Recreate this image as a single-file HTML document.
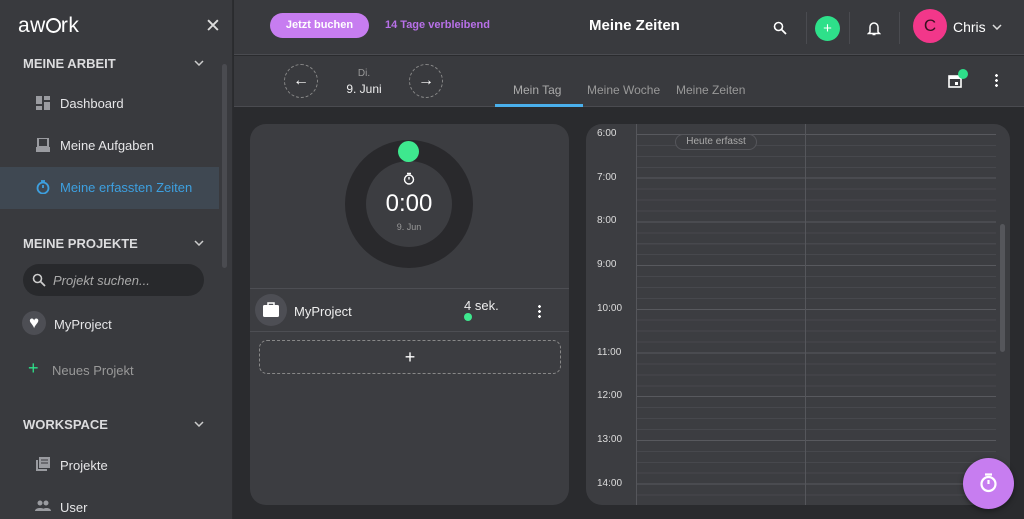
<!DOCTYPE html><html><head><meta charset="utf-8"><style>
*{box-sizing:border-box;margin:0;padding:0}
body{width:1024px;height:519px;overflow:hidden;background:#2a2b2e;font-family:"Liberation Sans",sans-serif;color:#e8e8ea;position:relative}
.a{position:absolute}
.sb{left:0;top:0;width:233px;height:519px;background:#393a3e;border-right:1px solid #2c2d30}
.sec{font-weight:bold;font-size:13px;color:#dcdcde;left:23px}
.chev{left:194px;width:10px;height:6px}
.item{font-size:13px;color:#e6e6e8;left:60px}
.ic{left:36px;width:14px;height:14px}
</style></head><body>
<div class="a sb">
 <div class="a" style="left:18px;top:14px;font-size:21px;color:#fff;letter-spacing:0.5px">aw<span style="display:inline-block;width:15px;height:15px;border:2.5px solid #fff;border-radius:50%;vertical-align:-1px"></span>rk</div>
 <div class="a" style="left:205px;top:15px;font-size:19px;color:#ddd">✕</div>
 <div class="a sec" style="top:56px">MEINE ARBEIT</div><svg class="a chev" style="top:60px" viewBox="0 0 10 6"><path d="M1 1l4 4 4-4" fill="none" stroke="#ccc" stroke-width="1.5"/></svg>
 <div class="a" style="left:222px;top:64px;width:5px;height:204px;background:#4a4b50;border-radius:3px"></div>
 <svg class="a ic" style="top:96px" viewBox="0 0 14 14"><rect x="0" y="0" width="6" height="8" fill="#9a9ba0"/><rect x="8" y="0" width="6" height="4" fill="#9a9ba0"/><rect x="0" y="10" width="6" height="4" fill="#9a9ba0"/><rect x="8" y="6" width="6" height="8" fill="#9a9ba0"/></svg>
 <div class="a item" style="top:96px">Dashboard</div>
 <svg class="a ic" style="top:138px" viewBox="0 0 14 14"><rect x="2" y="0" width="10" height="9" fill="none" stroke="#9a9ba0" stroke-width="2"/><rect x="0" y="9" width="14" height="5" fill="#9a9ba0"/></svg>
 <div class="a item" style="top:138px">Meine Aufgaben</div>
 <div class="a" style="left:0;top:167px;width:219px;height:42px;background:#3f4852"></div>
 <svg class="a ic" style="top:180px" viewBox="0 0 14 14"><circle cx="7" cy="8" r="5.5" fill="none" stroke="#3da0e0" stroke-width="1.8"/><path d="M5 1h4M7 8V5" stroke="#3da0e0" stroke-width="1.8"/></svg>
 <div class="a item" style="top:180px;color:#3da0e0">Meine erfassten Zeiten</div>
 <div class="a sec" style="top:236px">MEINE PROJEKTE</div><svg class="a chev" style="top:240px" viewBox="0 0 10 6"><path d="M1 1l4 4 4-4" fill="none" stroke="#ccc" stroke-width="1.5"/></svg>
 <div class="a" style="left:23px;top:264px;width:181px;height:32px;border-radius:16px;background:#28292c"></div>
 <svg class="a" style="left:32px;top:273px" width="14" height="14" viewBox="0 0 14 14"><circle cx="5.5" cy="5.5" r="4" fill="none" stroke="#ccc" stroke-width="1.6"/><path d="M8.5 8.5L13 13" stroke="#ccc" stroke-width="1.8"/></svg>
 <div class="a" style="left:53px;top:273px;font-size:13px;font-style:italic;color:#aaa">Projekt suchen...</div>
 <div class="a" style="left:22px;top:311px;width:24px;height:24px;border-radius:50%;background:#4d4e54;color:#fff;font-size:17px;text-align:center;line-height:24px">♥</div>
 <div class="a item" style="left:54px;top:317px">MyProject</div>
 <div class="a" style="left:28px;top:358px;color:#2ee08a;font-size:18px">+</div>
 <div class="a item" style="left:52px;top:363px;color:#999">Neues Projekt</div>
 <div class="a sec" style="top:417px">WORKSPACE</div><svg class="a chev" style="top:421px" viewBox="0 0 10 6"><path d="M1 1l4 4 4-4" fill="none" stroke="#ccc" stroke-width="1.5"/></svg>
 <svg class="a ic" style="top:457px" viewBox="0 0 14 14"><rect x="3" y="0" width="11" height="11" fill="#9a9ba0"/><rect x="0" y="3" width="2" height="11" fill="#9a9ba0"/><rect x="0" y="12" width="11" height="2" fill="#9a9ba0"/><path d="M5 3h7M5 6h7" stroke="#393a3e" stroke-width="1"/></svg>
 <div class="a item" style="top:458px">Projekte</div>
 <svg class="a" style="left:35px;top:500px" width="16" height="12" viewBox="0 0 16 12"><circle cx="5" cy="3" r="2.5" fill="#9a9ba0"/><circle cx="11" cy="3" r="2.5" fill="#9a9ba0"/><path d="M0 11c0-4 10-4 10 0zM7 11c0-4 9-4 9 0z" fill="#9a9ba0"/></svg>
 <div class="a item" style="top:500px">User</div>
</div>
<!-- header -->
<div class="a" style="left:234px;top:0;width:790px;height:55px;background:#393a3e;border-bottom:1px solid #4a4b50"></div>
<div class="a" style="left:270px;top:13px;width:99px;height:25px;border-radius:13px;background:#c77df0;color:#fff;font-size:11px;font-weight:bold;text-align:center;line-height:25px">Jetzt buchen</div>
<div class="a" style="left:385px;top:19px;font-size:11px;font-weight:bold;color:#b870e8">14 Tage verbleibend</div>
<div class="a" style="left:589px;top:17px;font-size:15px;font-weight:bold;color:#fff">Meine Zeiten</div>
<svg class="a" style="left:773px;top:21px" width="14" height="14" viewBox="0 0 14 14"><circle cx="5.5" cy="5.5" r="4" fill="none" stroke="#fff" stroke-width="1.6"/><path d="M8.5 8.5L13 13" stroke="#fff" stroke-width="1.8"/></svg>
<div class="a" style="left:806px;top:12px;width:1px;height:32px;background:#4a4b50"></div>
<div class="a" style="left:815px;top:16px;width:25px;height:25px;border-radius:50%;background:#2ee08a;color:#fff;text-align:center;line-height:25px;font-size:15px">+</div>
<div class="a" style="left:849px;top:12px;width:1px;height:32px;background:#4a4b50"></div>
<svg class="a" style="left:867px;top:20px" width="14" height="16" viewBox="0 0 14 16"><path d="M3 12V7a4 4 0 018 0v5l1.5 1.5h-11z" fill="none" stroke="#fff" stroke-width="1.5"/><path d="M5.5 14.5h3" stroke="#fff" stroke-width="1.5"/></svg>
<div class="a" style="left:899px;top:12px;width:1px;height:32px;background:#4a4b50"></div>
<div class="a" style="left:913px;top:9px;width:34px;height:34px;border-radius:50%;background:#f2378a;color:#3a1020;text-align:center;line-height:34px;font-size:17px">C</div>
<div class="a" style="left:953px;top:19px;font-size:14px;color:#fff">Chris</div>
<svg class="a" style="left:992px;top:24px" width="10" height="6" viewBox="0 0 10 6"><path d="M1 1l4 4 4-4" fill="none" stroke="#ddd" stroke-width="1.5"/></svg>
<!-- subheader -->
<div class="a" style="left:234px;top:56px;width:790px;height:51px;background:#393a3e;border-bottom:1px solid #4a4b50"></div>
<div class="a" style="left:284px;top:64px;width:34px;height:34px;border-radius:50%;border:1px dashed #888;text-align:center;line-height:31px;font-size:16px;color:#fff">←</div>
<div class="a" style="left:409px;top:64px;width:34px;height:34px;border-radius:50%;border:1px dashed #888;text-align:center;line-height:31px;font-size:16px;color:#fff">→</div>
<div class="a" style="left:340px;top:68px;width:48px;text-align:center;font-size:10px;color:#999">Di.</div>
<div class="a" style="left:335px;top:82px;width:58px;text-align:center;font-size:12px;color:#eee">9. Juni</div>
<div class="a" style="left:513px;top:83px;font-size:12px;color:#aaa">Mein Tag</div>
<div class="a" style="left:495px;top:104px;width:88px;height:3px;background:#4ab0ec"></div>
<div class="a" style="left:587px;top:83px;font-size:12px;color:#999">Meine Woche</div>
<div class="a" style="left:676px;top:83px;font-size:12px;color:#999">Meine Zeiten</div>
<svg class="a" style="left:948px;top:73px" width="14" height="15" viewBox="0 0 14 15"><rect x="1" y="3" width="12" height="11" fill="none" stroke="#fff" stroke-width="1.6"/><rect x="1" y="3" width="12" height="3" fill="#fff"/><rect x="7" y="9" width="3" height="3" fill="#fff"/></svg>
<div class="a" style="left:958px;top:69px;width:10px;height:10px;border-radius:50%;background:#2ee08a"></div>
<div class="a" style="left:995px;top:73px;width:3px;height:14px;background:radial-gradient(circle,#fff 1.3px,transparent 1.5px) 0 0/3px 5px"></div>
<!-- left card -->
<div class="a" style="left:250px;top:124px;width:319px;height:381px;border-radius:16px;background:#3c3d41"></div>
<div class="a" style="left:345px;top:140px;width:128px;height:128px;border-radius:50%;background:#29292c"></div>
<div class="a" style="left:366px;top:161px;width:86px;height:86px;border-radius:50%;background:#3c3d41"></div>
<div class="a" style="left:398px;top:141px;width:21px;height:21px;border-radius:50%;background:#3ee88e"></div>
<svg class="a" style="left:403px;top:172px" width="12" height="13" viewBox="0 0 12 13"><circle cx="6" cy="7.5" r="4.5" fill="none" stroke="#fff" stroke-width="1.4"/><path d="M4 1.5h4M6 7.5V5" stroke="#fff" stroke-width="1.4"/></svg>
<div class="a" style="left:359px;top:190px;width:100px;text-align:center;font-size:24px;color:#fff">0:00</div>
<div class="a" style="left:359px;top:222px;width:100px;text-align:center;font-size:9px;color:#999">9. Jun</div>
<div class="a" style="left:250px;top:288px;width:319px;height:1px;background:#4d4e53"></div>
<div class="a" style="left:250px;top:331px;width:319px;height:1px;background:#4d4e53"></div>
<div class="a" style="left:255px;top:294px;width:32px;height:32px;border-radius:50%;background:#4d4e54"></div>
<svg class="a" style="left:262px;top:301px" width="18" height="17" viewBox="0 0 18 17"><rect x="1" y="4" width="16" height="12" rx="1.5" fill="#fff"/><path d="M6 4V2h6v2" fill="none" stroke="#fff" stroke-width="1.5"/></svg>
<div class="a" style="left:294px;top:304px;font-size:13px;color:#eee">MyProject</div>
<div class="a" style="left:464px;top:298px;font-size:13px;color:#eee">4 sek.</div>
<div class="a" style="left:464px;top:313px;width:8px;height:8px;border-radius:50%;background:#3ee88e"></div>
<div class="a" style="left:538px;top:304px;width:3px;height:14px;background:radial-gradient(circle,#fff 1.3px,transparent 1.5px) 0 0/3px 5px"></div>
<div class="a" style="left:259px;top:340px;width:302px;height:34px;border:1px dashed #888;border-radius:8px;text-align:center;line-height:32px;font-size:18px;color:#fff">+</div>
<!-- right card -->
<div class="a" style="left:586px;top:124px;width:424px;height:381px;border-radius:16px;background:#3c3d41;overflow:hidden">
 <div class="a" style="left:50px;top:10px;width:360px;height:380px;background:repeating-linear-gradient(to bottom,#47484d 0,#47484d 1px,transparent 1px,transparent 10.925px)"></div>
 <div class="a" style="left:50px;top:10px;width:360px;height:380px;background:repeating-linear-gradient(to bottom,#58595e 0,#58595e 1px,transparent 1px,transparent 43.7px)"></div>
 <div class="a" style="left:50px;top:0;width:1px;height:381px;background:#55565b"></div>
 <div class="a" style="left:219px;top:0;width:1px;height:381px;background:#55565b"></div>
 <div class="a" style="left:414px;top:100px;width:5px;height:128px;background:#55565b;border-radius:3px"></div>
 <div class="a" style="left:89px;top:10px;width:82px;height:16px;border:1px solid #55565b;border-radius:8px;background:#3c3d41;font-size:10px;color:#aaa;text-align:center;line-height:14px">Heute erfasst</div>
</div>
<div class="a" style="left:597px;top:112px;font-size:10px;color:#ddd;line-height:43.7px">6:00<br>7:00<br>8:00<br>9:00</div>
<div class="a" style="left:597px;top:287px;font-size:10px;color:#ddd;line-height:43.7px">10:00<br>11:00<br>12:00<br>13:00<br>14:00</div>
<div class="a" style="left:963px;top:458px;width:51px;height:51px;border-radius:50%;background:#c77df0;box-shadow:0 2px 6px rgba(0,0,0,.4)"></div>
<svg class="a" style="left:979px;top:472px" width="19" height="21" viewBox="0 0 19 21"><circle cx="9.5" cy="12" r="7" fill="none" stroke="#fff" stroke-width="2.2"/><path d="M6 2.5h7M9.5 12V8" stroke="#fff" stroke-width="2.2"/></svg>
</body></html>
